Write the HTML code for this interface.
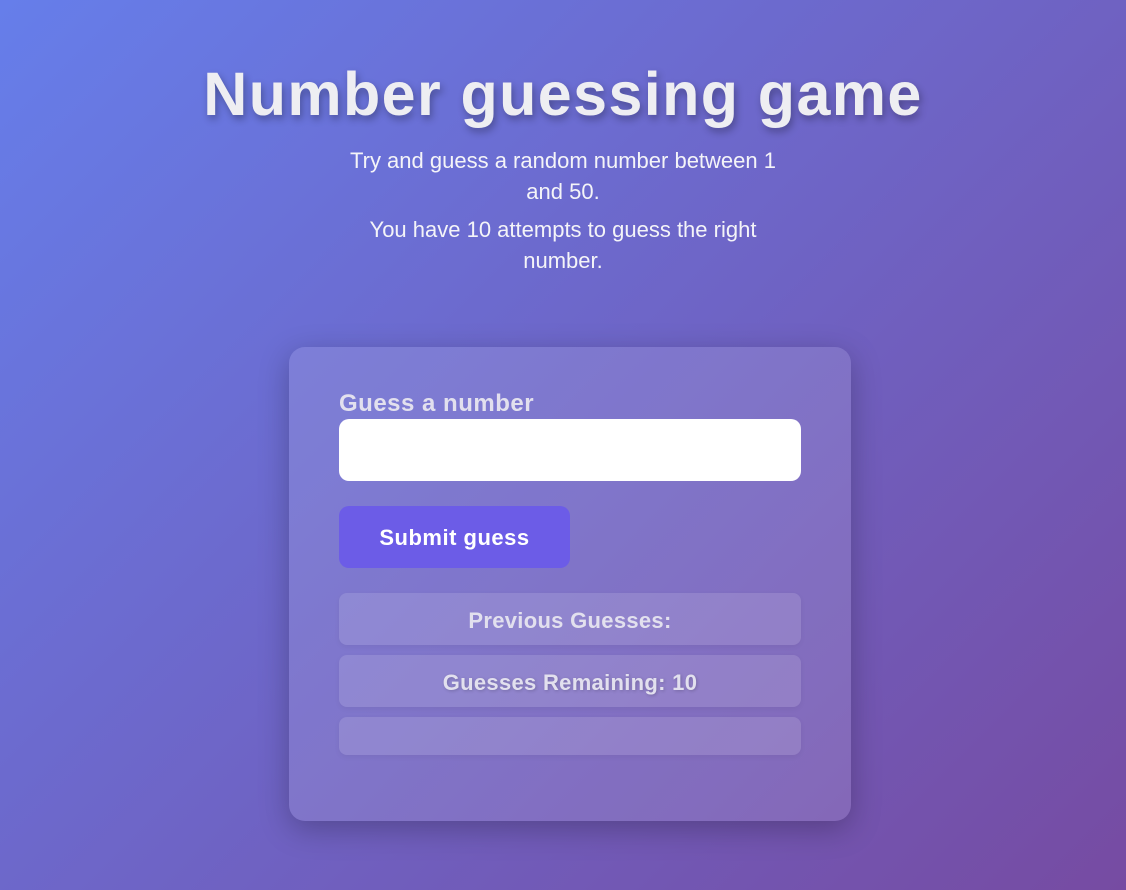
<!DOCTYPE html>
<html><head><meta charset="utf-8">
<style>
html,body{margin:0;padding:0;}
body{width:1126px;height:890px;overflow:hidden;background:linear-gradient(135deg,#667eea 0%,#764ba2 100%);font-family:"Liberation Sans",sans-serif;color:#f0f0f0;position:relative;}
h1{position:absolute;left:0;right:0;top:58px;margin:0;text-align:center;font-size:61px;font-weight:bold;line-height:72px;color:#eeeef2;text-shadow:2px 4px 8px rgba(0,0,0,0.3);letter-spacing:1.4px;}
.p{position:absolute;left:340px;width:446px;text-align:center;font-size:22px;line-height:31px;color:#f4f4f8;}
.card{position:absolute;left:289px;top:347px;width:562px;height:474px;border-radius:16px;background:rgba(255,255,255,0.12);box-shadow:0 8px 30px rgba(0,0,0,0.25);}
.label{position:absolute;left:50px;top:43px;font-size:24px;font-weight:bold;color:#e2e0ee;letter-spacing:0.5px;}
.input{position:absolute;left:50px;top:72px;width:462px;height:62px;border-radius:10px;background:#fff;}
.btn{position:absolute;left:50px;top:159px;width:231px;height:62px;border-radius:10px;background:#6c5ce7;color:#fff;font-weight:bold;font-size:22px;line-height:64px;text-align:center;letter-spacing:0.5px;}
.box{position:absolute;left:50px;width:462px;border-radius:8px;background:rgba(255,255,255,0.13);box-shadow:0 2px 6px rgba(0,0,0,0.05);color:#e2e0ee;font-weight:bold;font-size:22px;text-align:center;letter-spacing:0.3px;}
</style></head><body>
<h1>Number guessing game</h1>
<div class="p" style="top:145px">Try and guess a random number between 1 and 50.</div>
<div class="p" style="top:214px">You have 10 attempts to guess the right number.</div>
<div class="card">
<div class="label">Guess a number</div>
<div class="input"></div>
<div class="btn">Submit guess</div>
<div class="box" style="top:246px;height:52px;line-height:56px">Previous Guesses:</div>
<div class="box" style="top:308px;height:52px;line-height:56px;text-shadow:1px 1px 3px rgba(0,0,0,0.2)">Guesses Remaining: 10</div>
<div class="box" style="top:370px;height:38px"></div>
</div>
</body></html>
